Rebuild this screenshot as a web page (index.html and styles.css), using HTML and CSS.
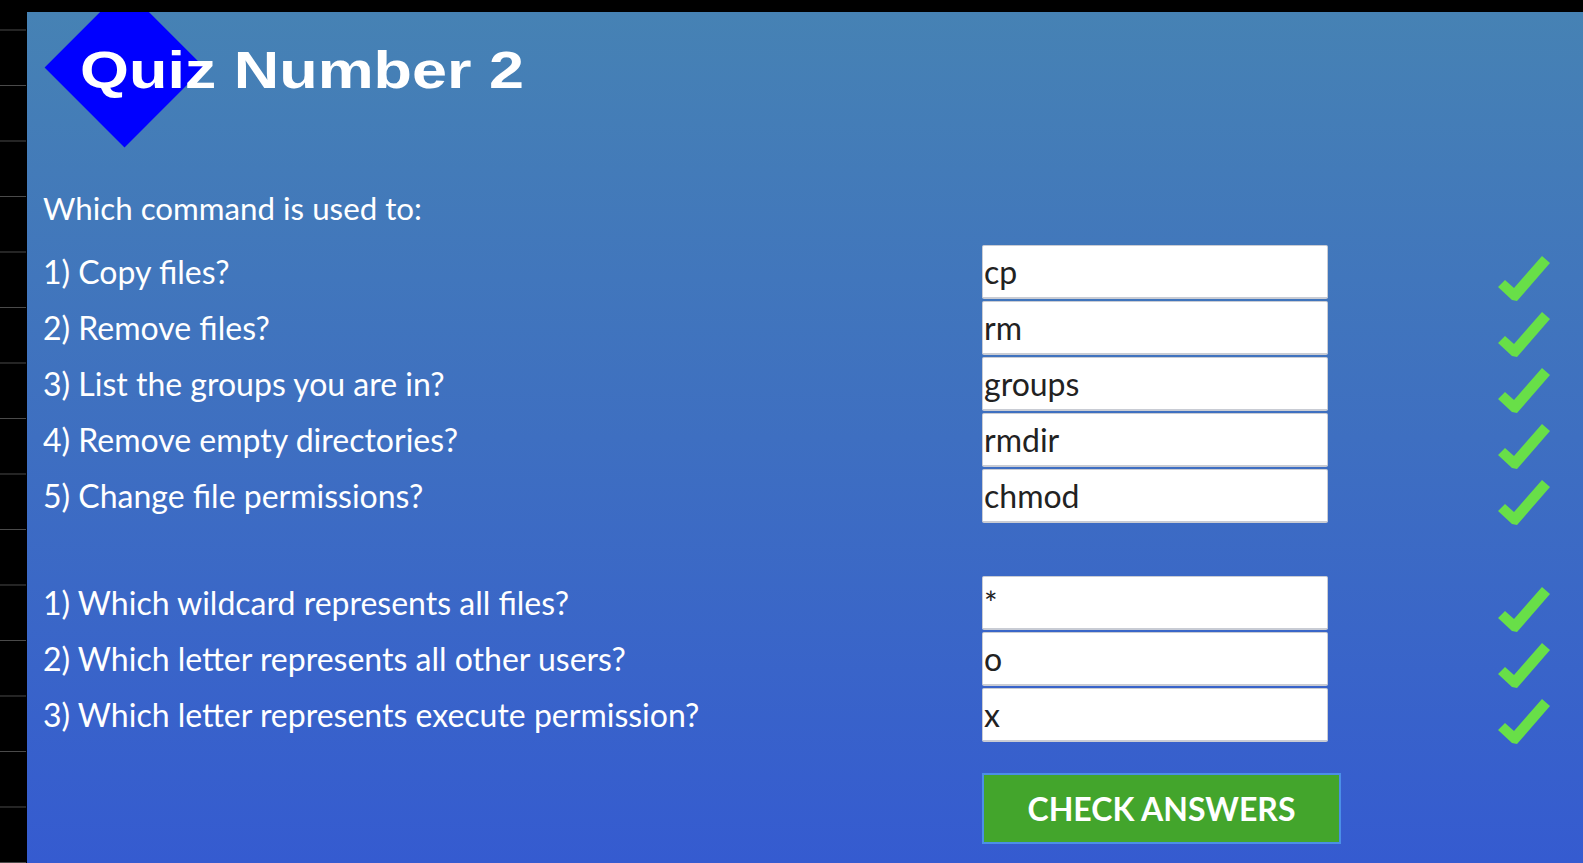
FILE: index.html
```html
<!DOCTYPE html>
<html>
<head>
<meta charset="utf-8">
<title>Quiz Number 2</title>
<link rel="stylesheet" href="styles.css">
</head>
<body>
<div class="frame">
  <div class="gutter"></div>
  <main class="quiz">
    <header class="quiz-header">
      <div class="diamond"></div>
      <h1 class="title">Quiz Number 2</h1>
    </header>
    <p class="intro">Which command is used to:</p>
    <div class="group">
      <div class="row"><span class="label">1) Copy files?</span><input class="answer" value="cp"><svg class="check" viewBox="0 0 53 48"><polygon points="8,26 17,34 45,2 53,9 20,47 15,46 1,33"/></svg></div>
      <div class="row"><span class="label">2) Remove files?</span><input class="answer" value="rm"><svg class="check" viewBox="0 0 53 48"><polygon points="8,26 17,34 45,2 53,9 20,47 15,46 1,33"/></svg></div>
      <div class="row"><span class="label">3) List the groups you are in?</span><input class="answer" value="groups"><svg class="check" viewBox="0 0 53 48"><polygon points="8,26 17,34 45,2 53,9 20,47 15,46 1,33"/></svg></div>
      <div class="row"><span class="label">4) Remove empty directories?</span><input class="answer" value="rmdir"><svg class="check" viewBox="0 0 53 48"><polygon points="8,26 17,34 45,2 53,9 20,47 15,46 1,33"/></svg></div>
      <div class="row"><span class="label">5) Change file permissions?</span><input class="answer" value="chmod"><svg class="check" viewBox="0 0 53 48"><polygon points="8,26 17,34 45,2 53,9 20,47 15,46 1,33"/></svg></div>
    </div>
    <div class="group group-second">
      <div class="row"><span class="label">1) Which wildcard represents all files?</span><input class="answer" value="*"><svg class="check" viewBox="0 0 53 48"><polygon points="8,26 17,34 45,2 53,9 20,47 15,46 1,33"/></svg></div>
      <div class="row"><span class="label">2) Which letter represents all other users?</span><input class="answer" value="o"><svg class="check" viewBox="0 0 53 48"><polygon points="8,26 17,34 45,2 53,9 20,47 15,46 1,33"/></svg></div>
      <div class="row"><span class="label">3) Which letter represents execute permission?</span><input class="answer" value="x"><svg class="check" viewBox="0 0 53 48"><polygon points="8,26 17,34 45,2 53,9 20,47 15,46 1,33"/></svg></div>
    </div>
    <div class="actions">
      <button class="submit">CHECK ANSWERS</button>
    </div>
  </main>
</div>
</body>
</html>
```

FILE: styles.css
```css
* { box-sizing: border-box; }

html, body {
  margin: 0;
  padding: 0;
  height: 100%;
  background: #000;
  overflow: hidden;
}

.frame {
  display: flex;
  height: 863px;
}

.gutter {
  width: 27px;
  flex: none;
  background-color: #000;
  background-image: linear-gradient(to bottom, #4a4a4a 0, #4a4a4a 1px, transparent 1px);
  background-size: 26px 55.5px;
  background-repeat: repeat-y;
  background-position: 0 29.5px;
}

.quiz {
  flex: 1;
  margin-top: 12px;
  padding-left: 16px;
  background: linear-gradient(to bottom, #4682b4 0%, #3e6fc1 50%, #355bd0 100%);
  position: relative;
  overflow: hidden;
  font-family: "Lato", "Liberation Sans", sans-serif;
  color: #fff;
}

.quiz-header {
  position: relative;
  height: 84px;
  padding-top: 32px;
  padding-left: 37px;
}

.diamond {
  position: absolute;
  left: 25px;
  top: -1.5px;
  width: 113px;
  height: 113px;
  background: #0000ff;
  transform: rotate(45deg);
}

.title {
  position: relative;
  margin: 0;
  display: inline-block;
  font-family: "Liberation Sans", Arial, sans-serif;
  font-weight: bold;
  font-size: 52px;
  line-height: 52px;
  color: #fff;
  white-space: nowrap;
  transform: scaleX(1.21);
  transform-origin: left center;
}

.intro {
  margin: 84.6px 0 0 0;
  font-size: 31.3px;
  line-height: 54px;
  height: 54px;
}

.group {
  margin-top: 10.4px;
  display: flex;
  flex-direction: column;
  gap: 2px;
}

.group-second {
  margin-top: 53px;
}

.row {
  display: grid;
  grid-template-columns: 939px 346px 169px 53px;
  grid-template-areas: "label input gap check";
  height: 54px;
}

.label {
  grid-area: label;
  font-size: 32px;
  line-height: 54px;
  white-space: nowrap;
}

.answer {
  grid-area: input;
  width: 346px;
  height: 54px;
  margin: 0;
  padding: 0 0 0 1px;
  border: 1px solid #c9ccd4;
  border-bottom-width: 2px;
  border-radius: 2px;
  background: #fff;
  color: #222;
  font-family: "Lato", "Liberation Sans", sans-serif;
  font-size: 32px;
  outline: none;
}

.check {
  grid-area: check;
  width: 53px;
  height: 48px;
  margin-top: 9px;
  fill: #68df48;
}

.actions {
  margin-top: 31px;
  padding-left: 939px;
}

.submit {
  width: 359px;
  height: 71px;
  background: #43a52c;
  border: 2px solid #4b8fe6;
  color: #fff;
  font-family: "Lato", "Liberation Sans", sans-serif;
  font-weight: bold;
  font-size: 32px;
  padding: 0;
  cursor: pointer;
}
```
